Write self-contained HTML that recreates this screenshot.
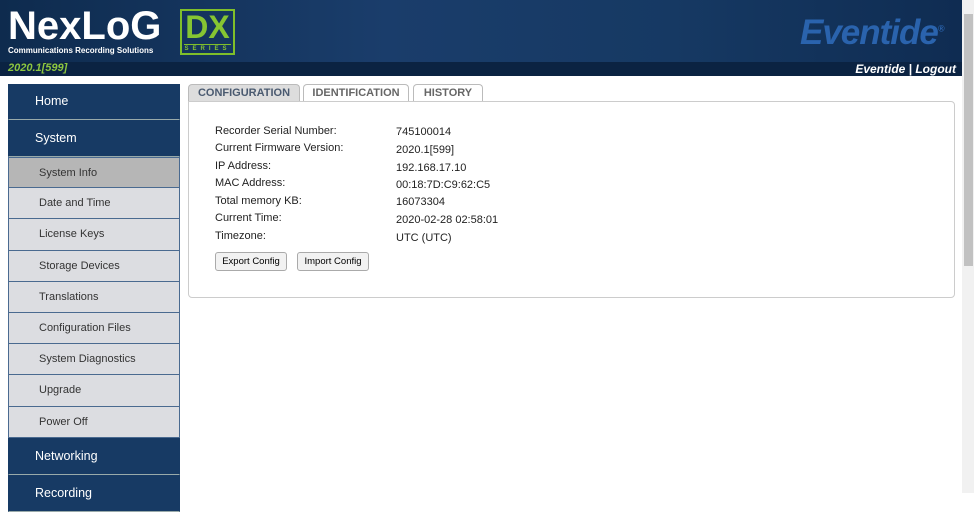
<!DOCTYPE html><html><head><style>
body{margin:0;width:974px;height:493px;overflow:hidden;background:#fff;font-family:"Liberation Sans",Arial,sans-serif;position:relative}
.hdr{position:absolute;left:0;top:0;width:962px;height:76px;background:linear-gradient(90deg,#0e2b4e,#1a3d6b 40%,#163963 70%,#0f2c52)}
.strip{position:absolute;left:0;top:62px;width:962px;height:14px;background:#0b2342}
.logo{position:absolute;left:8px;top:4px;color:#fff;font-weight:bold;font-size:40px;letter-spacing:0px;line-height:44px}
.sub{position:absolute;left:8px;top:46px;color:#fff;font-weight:bold;font-size:8px}
.dx{position:absolute;left:180px;top:9px;width:55px;height:46px;border:2px solid #7fbf2a;box-sizing:border-box;color:#86c532;font-weight:bold;font-size:32px;text-align:center;line-height:33px}
.dx small{display:block;font-size:6px;letter-spacing:4px;line-height:8px;border-top:1px solid #7fbf2a;margin:0 2px}
.ver{position:absolute;left:8px;top:62px;color:#8cc63f;font-weight:bold;font-style:italic;font-size:11px}
.ev{position:absolute;left:800px;top:13px;color:#2a63ad;font-weight:bold;font-style:italic;font-size:35px;letter-spacing:-1px}
.lo{position:absolute;right:18px;top:62px;color:#fff;font-weight:bold;font-style:italic;font-size:12px}
.nav{position:absolute;left:8px;top:84px;width:172px}
.nav div{box-sizing:border-box;border:1px solid #4a6a90;border-top:none;font-size:11px;color:#333;padding-left:30px}
.nav .m{background:#173a64;color:#fff;font-size:12.5px;padding-left:26px;border-color:#173a64;border-bottom:1px solid #9aa}
.nav .s{background:#dcdde1;height:31.2px;line-height:30px}
.tab{position:absolute;top:84px;height:17px;box-sizing:border-box;border:1px solid #bbb;border-bottom:none;border-radius:4px 4px 0 0;font-size:11px;font-weight:bold;color:#666;text-align:center;line-height:17px}
.panel{position:absolute;left:188px;top:101px;width:767px;height:197px;border:1px solid #ccc;border-radius:0 4px 4px 4px;box-sizing:border-box}
.r{position:absolute;font-size:11px;color:#222}
.btn{position:absolute;top:252px;height:19px;border:1px solid #aaa;border-radius:3px;background:#f2f2f2;font-size:9.5px;line-height:18px;text-align:center;box-sizing:border-box}
.sb{position:absolute;left:962px;top:0;width:12px;height:493px;background:#f1f1f1}
.th{position:absolute;left:964px;top:14px;width:9px;height:252px;background:#c1c1c1}
</style></head><body>
<div class="hdr"></div><div class="strip"></div>
<div class="logo">NexLoG</div>
<div class="sub">Communications Recording Solutions</div>
<div class="dx">DX<small>SERIES</small></div>
<div class="ver">2020.1[599]</div>
<div class="ev">Eventide<sup style="font-size:9px">®</sup></div>
<div class="lo">Eventide | Logout</div>
<div class="nav">
<div class="m" style="height:36px;line-height:35px">Home</div>
<div class="m" style="height:37px;line-height:36px">System</div>
<div class="s" style="background:#b6b6b6;border-top:1px solid #4a6a90">System Info</div>
<div class="s">Date and Time</div><div class="s">License Keys</div><div class="s">Storage Devices</div><div class="s">Translations</div><div class="s">Configuration Files</div><div class="s">System Diagnostics</div><div class="s">Upgrade</div><div class="s">Power Off</div>
<div class="m" style="height:37px;line-height:36px">Networking</div>
<div class="m" style="height:37px;line-height:36px">Recording</div>
</div>
<div class="tab" style="left:188px;width:112px;background:#ddd;color:#4a5a70">CONFIGURATION</div>
<div class="tab" style="left:303px;width:106px">IDENTIFICATION</div>
<div class="tab" style="left:413px;width:70px">HISTORY</div>
<div class="panel"></div>
<div class="r" style="left:215px;top:125px">Recorder Serial Number:</div><div class="r" style="left:396px;top:126px">745100014</div>
<div class="r" style="left:215px;top:142px">Current Firmware Version:</div><div class="r" style="left:396px;top:144px">2020.1[599]</div>
<div class="r" style="left:215px;top:160px">IP Address:</div><div class="r" style="left:396px;top:162px">192.168.17.10</div>
<div class="r" style="left:215px;top:177px">MAC Address:</div><div class="r" style="left:396px;top:179px">00:18:7D:C9:62:C5</div>
<div class="r" style="left:215px;top:195px">Total memory KB:</div><div class="r" style="left:396px;top:196px">16073304</div>
<div class="r" style="left:215px;top:212px">Current Time:</div><div class="r" style="left:396px;top:214px">2020-02-28 02:58:01</div>
<div class="r" style="left:215px;top:230px">Timezone:</div><div class="r" style="left:396px;top:232px">UTC (UTC)</div>
<div class="btn" style="left:215px;width:72px">Export Config</div>
<div class="btn" style="left:297px;width:72px">Import Config</div>
<div class="sb"></div><div class="th"></div>
</body></html>
